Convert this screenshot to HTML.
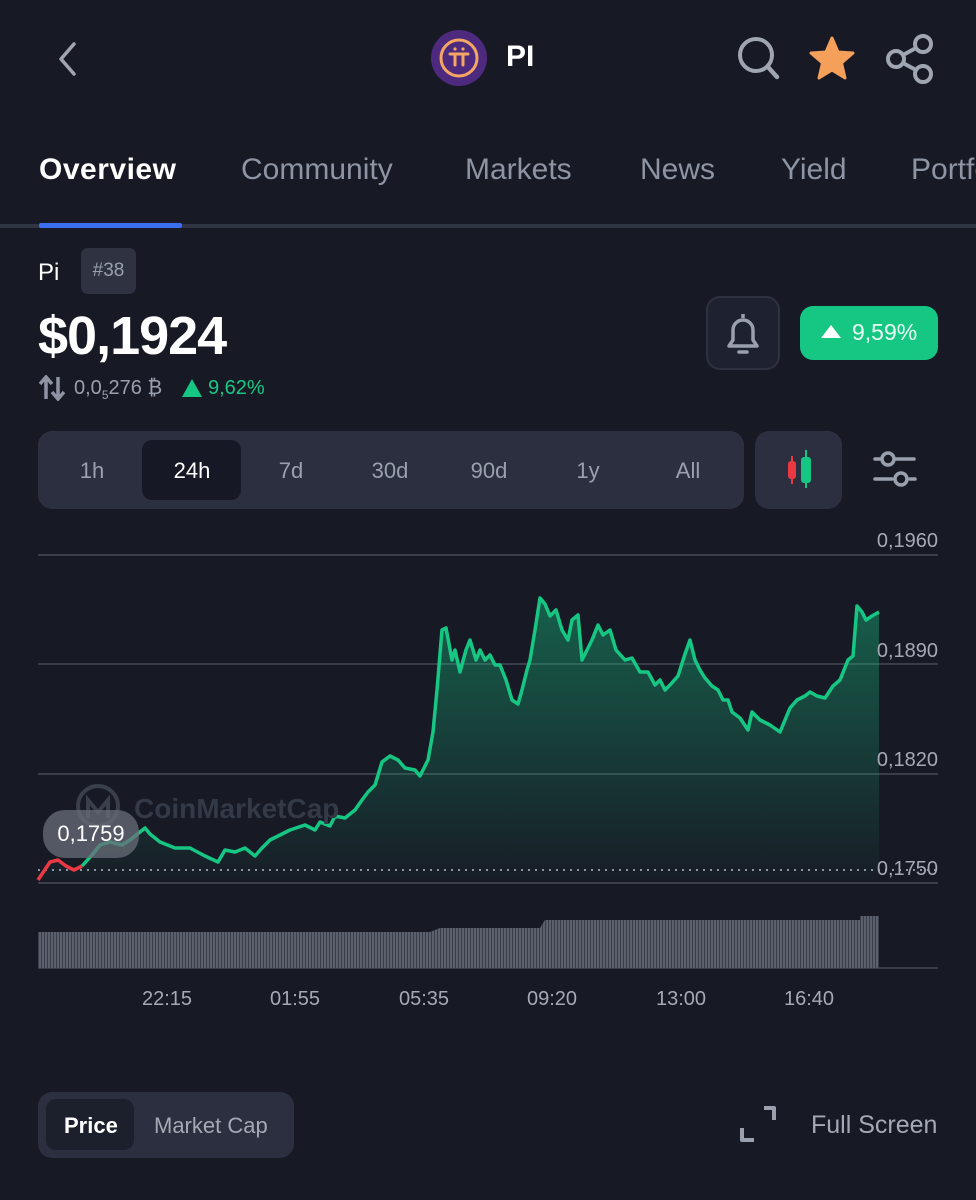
<!DOCTYPE html>
<html><head><meta charset="utf-8"><style>
*{margin:0;padding:0;box-sizing:border-box}
body{width:976px;height:1200px;background:#171a25;font-family:"Liberation Sans",sans-serif;position:relative;overflow:hidden;color:#fff}
.a{position:absolute;white-space:nowrap}
.tab{position:absolute;top:153px;font-size:30px;color:#8e94a3}
.seg{position:absolute;top:431px;left:38px;width:706px;height:78px;background:#2b2f3f;border-radius:14px}
.seg span{position:absolute;top:27px;font-size:22px;color:#9aa0ae;width:80px;text-align:center}
.yl{position:absolute;right:38px;font-size:20px;color:#a4a9b5}
.xl{position:absolute;top:988px;font-size:20px;color:#a4a9b5;width:80px;text-align:center}
</style></head><body>
<svg class="a" style="left:52px;top:40px" width="30" height="40" viewBox="0 0 30 40"><path d="M22 4 L9 19 L22 34" stroke="#a0a5b2" stroke-width="3.5" fill="none" stroke-linecap="round" stroke-linejoin="round"/></svg>
<svg class="a" style="left:431px;top:30px" width="56" height="56" viewBox="0 0 56 56"><circle cx="28" cy="28" r="28" fill="#4d2a7e"/><circle cx="28" cy="28" r="18" fill="none" stroke="#f5a663" stroke-width="3"/><path d="M19 24 H37 M24 24 V35 M32 24 V35" stroke="#f5a663" stroke-width="3" fill="none" stroke-linecap="round"/><circle cx="24" cy="19" r="1.6" fill="#f5a663"/><circle cx="32" cy="19" r="1.6" fill="#f5a663"/></svg>
<div class="a" style="left:506px;top:40px;font-size:30px;font-weight:bold">PI</div>
<svg class="a" style="left:734px;top:34px" width="50" height="50" viewBox="0 0 50 50"><circle cx="22" cy="21" r="16" fill="none" stroke="#a0a5b2" stroke-width="4"/><path d="M34 33 L43 43" stroke="#a0a5b2" stroke-width="4.5" stroke-linecap="round"/></svg>
<svg class="a" style="left:806px;top:34px" width="52" height="50" viewBox="0 0 52 50"><path d="M26 4 L32 18 L47 19 L35.5 29 L39 44 L26 36 L13 44 L16.5 29 L5 19 L20 18 Z" fill="#f5a05a" stroke="#f5a05a" stroke-width="3" stroke-linejoin="round"/></svg>
<svg class="a" style="left:882px;top:32px" width="54" height="54" viewBox="0 0 54 54"><circle cx="41" cy="12" r="8" fill="none" stroke="#a0a5b2" stroke-width="4"/><circle cx="14" cy="27" r="8" fill="none" stroke="#a0a5b2" stroke-width="4"/><circle cx="41" cy="42" r="8" fill="none" stroke="#a0a5b2" stroke-width="4"/><path d="M21 23 L34 16 M21 31 L34 38" stroke="#a0a5b2" stroke-width="4"/></svg>
<div class="tab" style="left:39px;color:#fff;font-weight:bold;letter-spacing:0.5px">Overview</div>
<div class="tab" style="left:241px">Community</div>
<div class="tab" style="left:465px">Markets</div>
<div class="tab" style="left:640px">News</div>
<div class="tab" style="left:781px">Yield</div>
<div class="tab" style="left:911px">Portfolio</div>
<div class="a" style="left:0;top:224px;width:976px;height:4px;background:#2f3442"></div>
<div class="a" style="left:39px;top:223px;width:143px;height:5px;background:#3b6ef0;border-radius:2px"></div>
<div class="a" style="left:38px;top:259px;font-size:24px">Pi</div>
<div class="a" style="left:81px;top:248px;width:55px;height:46px;background:#2e3241;border-radius:7px;color:#9aa0ae;font-size:19px;text-align:center;line-height:46px">#38</div>
<div class="a" style="left:38px;top:305px;font-size:54px;font-weight:bold;letter-spacing:-1px">$0,1924</div>
<svg class="a" style="left:38px;top:375px" width="28" height="26" viewBox="0 0 28 26"><path d="M8 24 V4 M2 9 L8 2 L14 9 M20 2 V22 M14 17 L20 24 L26 17" stroke="#8e94a3" stroke-width="3.5" fill="none"/></svg>
<div class="a" style="left:74px;top:377px;font-size:20px;color:#9aa0ae">0,0<sub style="font-size:12px">5</sub>276 ₿</div>
<svg class="a" style="left:181px;top:378px" width="22" height="20"><path d="M11 1 L21 19 H1 Z" fill="#16c784"/></svg>
<div class="a" style="left:208px;top:377px;font-size:20px;color:#16c784">9,62%</div>
<div class="a" style="left:706px;top:296px;width:74px;height:74px;border:2px solid #2d3140;background:#1e2130;border-radius:14px"></div>
<svg class="a" style="left:720px;top:310px" width="46" height="46" viewBox="0 0 46 46"><path d="M23 4 V8 M13 30 V20 A10 10 0 0 1 33 20 V30 L37 36 H9 Z" stroke="#9aa0ae" stroke-width="3.5" fill="none" stroke-linejoin="round"/><path d="M19 42 H27" stroke="#9aa0ae" stroke-width="3.5" stroke-linecap="round"/></svg>
<div class="a" style="left:800px;top:306px;width:138px;height:54px;background:#16c784;border-radius:13px"></div>
<svg class="a" style="left:820px;top:324px" width="22" height="16"><path d="M11 1 L21 14 H1 Z" fill="#fff"/></svg>
<div class="a" style="left:852px;top:319px;font-size:23px;color:#e8fff4">9,59%</div>
<div class="seg">
<div style="position:absolute;left:104px;top:9px;width:99px;height:60px;background:#161925;border-radius:10px"></div>
<span style="left:14px">1h</span><span style="left:114px;color:#fff">24h</span><span style="left:213px">7d</span><span style="left:312px">30d</span><span style="left:411px">90d</span><span style="left:510px">1y</span><span style="left:610px">All</span>
</div>
<div class="a" style="left:755px;top:431px;width:87px;height:78px;background:#2b2f3f;border-radius:14px"></div>
<svg class="a" style="left:780px;top:448px" width="36" height="42"><path d="M12 8 V36" stroke="#ea3943" stroke-width="2"/><rect x="8" y="13" width="8" height="18" rx="3" fill="#ea3943"/><path d="M26 2 V40" stroke="#16c784" stroke-width="2"/><rect x="21" y="9" width="10" height="26" rx="3" fill="#16c784"/></svg>
<svg class="a" style="left:872px;top:449px" width="46" height="40" viewBox="0 0 46 40"><circle cx="16" cy="10" r="6" fill="none" stroke="#9aa0ae" stroke-width="3.5"/><path d="M3 10 H8 M24 10 H42 M3 30 H20 M38 30 H43" stroke="#9aa0ae" stroke-width="3.5" stroke-linecap="round"/><circle cx="29" cy="30" r="6" fill="none" stroke="#9aa0ae" stroke-width="3.5"/></svg>
<svg class="a" style="left:0;top:0" width="976" height="1200">
<defs><linearGradient id="g" x1="0" y1="0" x2="0" y2="1"><stop offset="0" stop-color="#16c784" stop-opacity="0.4"/><stop offset="1" stop-color="#16c784" stop-opacity="0.02"/></linearGradient>
<pattern id="vb" width="3" height="10" patternUnits="userSpaceOnUse"><rect width="2" height="10" fill="#5c606c"/><rect x="2" width="1" height="10" fill="#3a3e4a"/></pattern></defs>
<g stroke="#3a3e4b" stroke-width="2"><line x1="38" y1="555" x2="938" y2="555"/><line x1="38" y1="664" x2="938" y2="664"/><line x1="38" y1="774" x2="938" y2="774"/><line x1="38" y1="883" x2="938" y2="883"/><line x1="38" y1="968" x2="938" y2="968"/></g>
<line x1="38" y1="870" x2="938" y2="870" stroke="#8e94a3" stroke-width="2" stroke-dasharray="2 5"/>
<path d="M38 968 V932 H430 L440 928 H540 L545 920 H860 V916 H879 V968 Z" fill="url(#vb)"/>
<path d="M38 880 L50 862 L58 860 L66 866 L74 870 L82 866 L92 855 L100 845 L110 842 L122 845 L130 840 L145 828 L150 834 L160 842 L175 848 L190 848 L205 856 L218 862 L225 850 L235 852 L245 848 L255 856 L262 848 L270 840 L278 836 L290 830 L305 825 L315 830 L320 822 L330 826 L335 816 L345 818 L355 810 L362 800 L368 792 L375 785 L382 762 L390 756 L398 760 L405 768 L415 770 L420 776 L428 760 L433 732 L437 690 L442 630 L446 628 L452 660 L455 650 L460 672 L466 650 L470 640 L476 660 L480 650 L485 660 L490 655 L495 665 L500 665 L506 680 L512 700 L518 704 L522 690 L527 670 L530 660 L535 630 L540 598 L545 604 L550 616 L556 610 L562 630 L568 640 L572 620 L578 615 L582 660 L587 650 L592 640 L598 625 L603 635 L610 630 L616 650 L625 660 L632 658 L640 672 L648 672 L655 685 L660 680 L665 690 L670 685 L678 676 L685 654 L690 640 L695 660 L700 670 L705 678 L712 686 L718 690 L723 700 L728 700 L732 712 L740 718 L748 730 L752 712 L760 720 L770 725 L780 732 L785 720 L790 708 L797 700 L805 696 L810 692 L817 696 L825 698 L833 686 L840 680 L848 660 L853 656 L857 606 L862 612 L866 620 L872 616 L879 612 L879 880 Z" fill="url(#g)"/>
<path d="M82 866 L92 855 L100 845 L110 842 L122 845 L130 840 L145 828 L150 834 L160 842 L175 848 L190 848 L205 856 L218 862 L225 850 L235 852 L245 848 L255 856 L262 848 L270 840 L278 836 L290 830 L305 825 L315 830 L320 822 L330 826 L335 816 L345 818 L355 810 L362 800 L368 792 L375 785 L382 762 L390 756 L398 760 L405 768 L415 770 L420 776 L428 760 L433 732 L437 690 L442 630 L446 628 L452 660 L455 650 L460 672 L466 650 L470 640 L476 660 L480 650 L485 660 L490 655 L495 665 L500 665 L506 680 L512 700 L518 704 L522 690 L527 670 L530 660 L535 630 L540 598 L545 604 L550 616 L556 610 L562 630 L568 640 L572 620 L578 615 L582 660 L587 650 L592 640 L598 625 L603 635 L610 630 L616 650 L625 660 L632 658 L640 672 L648 672 L655 685 L660 680 L665 690 L670 685 L678 676 L685 654 L690 640 L695 660 L700 670 L705 678 L712 686 L718 690 L723 700 L728 700 L732 712 L740 718 L748 730 L752 712 L760 720 L770 725 L780 732 L785 720 L790 708 L797 700 L805 696 L810 692 L817 696 L825 698 L833 686 L840 680 L848 660 L853 656 L857 606 L862 612 L866 620 L872 616 L879 612" fill="none" stroke="#16c784" stroke-width="3.5" stroke-linejoin="round"/>
<path d="M38 880 L50 862 L58 860 L66 866 L74 870 L82 866" fill="none" stroke="#ea3943" stroke-width="3.5" stroke-linejoin="round"/>
<circle cx="98" cy="806" r="20" fill="none" stroke="#3a3f4c" stroke-width="4"/>
<path d="M88 818 V800 L98 812 L108 800 V818" fill="none" stroke="#3a3f4c" stroke-width="4"/>
<text x="134" y="818" font-family="Liberation Sans" font-size="28" font-weight="bold" fill="#343947">CoinMarketCap</text>
<rect x="43" y="810" width="96" height="48" rx="22" fill="#6a6e7a" fill-opacity="0.75"/>
<text x="91" y="841" font-family="Liberation Sans" font-size="22" fill="#fff" text-anchor="middle">0,1759</text>
</svg>
<div class="yl" style="top:530px">0,1960</div>
<div class="yl" style="top:640px">0,1890</div>
<div class="yl" style="top:749px">0,1820</div>
<div class="yl" style="top:858px">0,1750</div>
<div class="xl" style="left:127px">22:15</div>
<div class="xl" style="left:255px">01:55</div>
<div class="xl" style="left:384px">05:35</div>
<div class="xl" style="left:512px">09:20</div>
<div class="xl" style="left:641px">13:00</div>
<div class="xl" style="left:769px">16:40</div>
<div class="a" style="left:38px;top:1092px;width:256px;height:66px;background:#2b2f3f;border-radius:14px"></div>
<div class="a" style="left:46px;top:1099px;width:88px;height:51px;background:#1c1f2c;border-radius:10px"></div>
<div class="a" style="left:64px;top:1113px;font-size:22px;font-weight:bold">Price</div>
<div class="a" style="left:154px;top:1113px;font-size:22px;color:#a4a9b5">Market Cap</div>
<svg class="a" style="left:738px;top:1104px" width="42" height="42" viewBox="0 0 42 42"><path d="M26 4 H36 V16 M4 24 V36 H16" stroke="#9aa0ae" stroke-width="4" fill="none" stroke-linejoin="round"/></svg>
<div class="a" style="left:811px;top:1111px;font-size:25px;color:#a4a9b5">Full Screen</div>
</body></html>
